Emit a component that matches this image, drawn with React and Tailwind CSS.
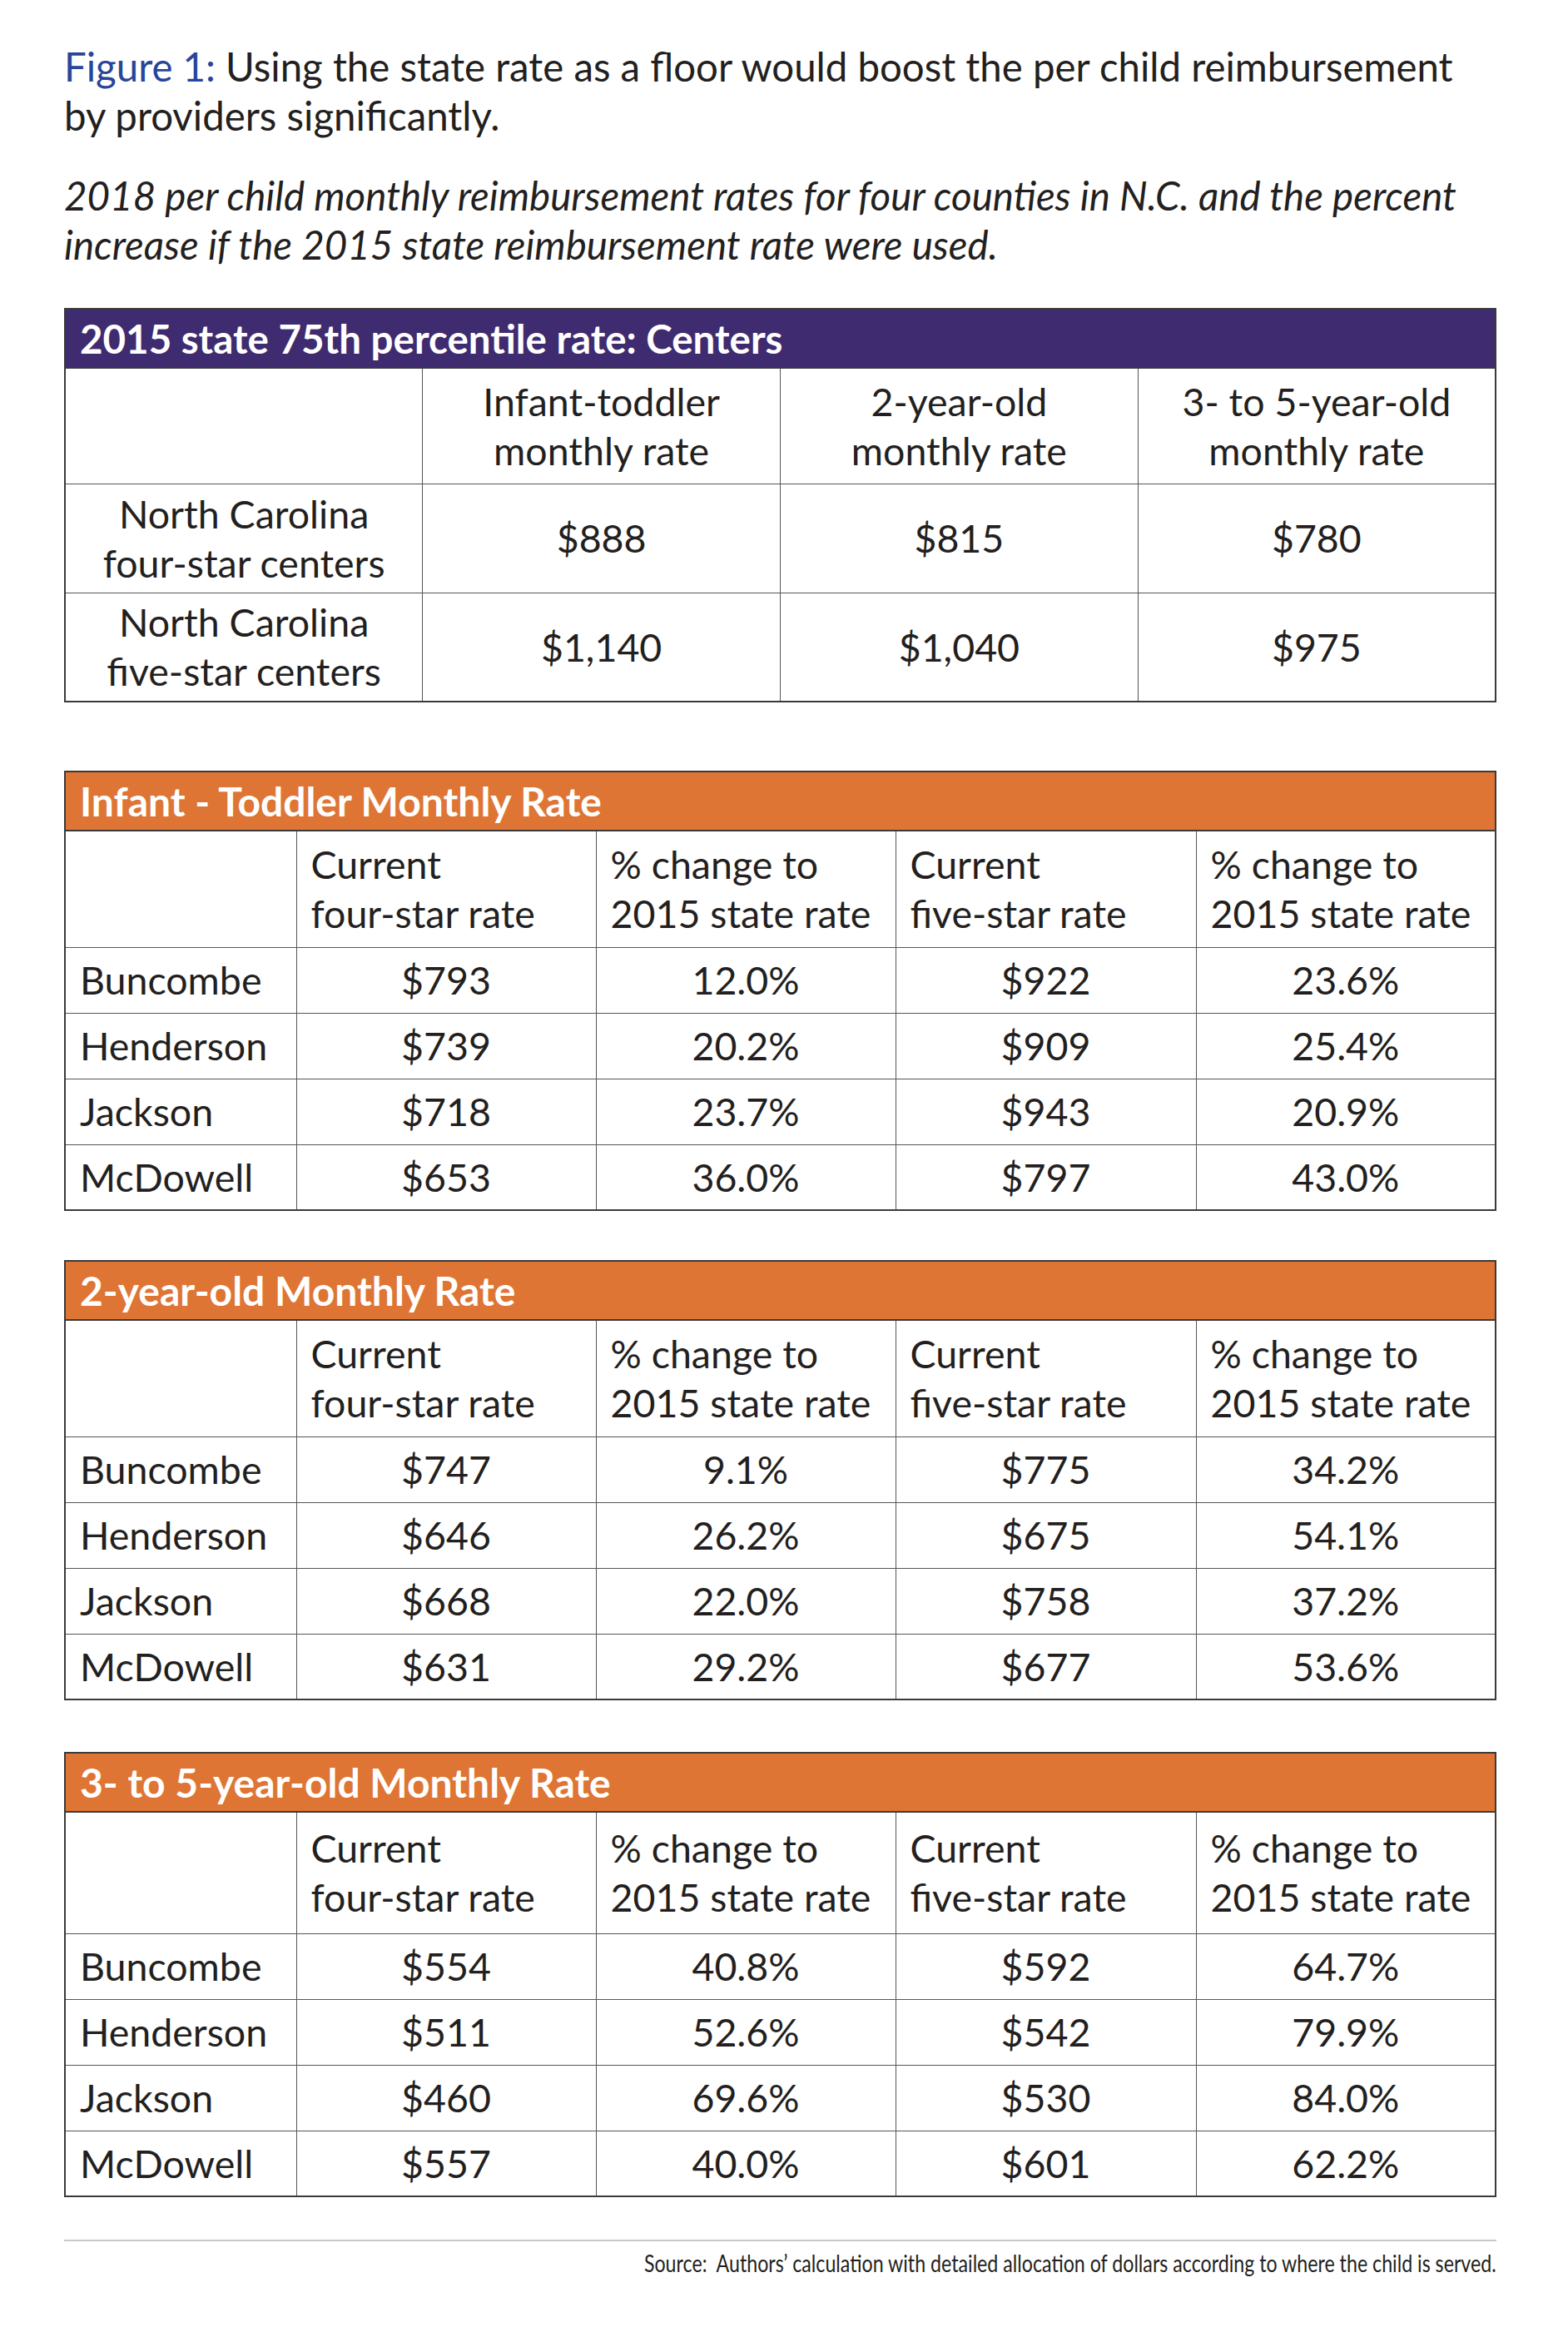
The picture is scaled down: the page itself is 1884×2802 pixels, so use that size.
import React from "react";

const FONT = { fontFamily: "Lato, 'Open Sans', sans-serif" };

const counties = ["Buncombe", "Henderson", "Jackson", "McDowell"];

const tables = [
  {
    title: "Infant - Toddler Monthly Rate",
    headH: "h-[140px]",
    rows: [
      ["$793", "12.0%", "$922", "23.6%"],
      ["$739", "20.2%", "$909", "25.4%"],
      ["$718", "23.7%", "$943", "20.9%"],
      ["$653", "36.0%", "$797", "43.0%"],
    ],
    mt: "mt-[82px]",
  },
  {
    title: "2-year-old Monthly Rate",
    headH: "h-[140px]",
    rows: [
      ["$747", "9.1%", "$775", "34.2%"],
      ["$646", "26.2%", "$675", "54.1%"],
      ["$668", "22.0%", "$758", "37.2%"],
      ["$631", "29.2%", "$677", "53.6%"],
    ],
    mt: "mt-[59px]",
  },
  {
    title: "3- to 5-year-old Monthly Rate",
    headH: "h-[146px]",
    rows: [
      ["$554", "40.8%", "$592", "64.7%"],
      ["$511", "52.6%", "$542", "79.9%"],
      ["$460", "69.6%", "$530", "84.0%"],
      ["$557", "40.0%", "$601", "62.2%"],
    ],
    mt: "mt-[62px]",
  },
];

const cell = "border-[1.5px] border-[#555555]";

function RateTable({ t }) {
  return (
    <table
      className={`${t.mt} w-full table-fixed border-collapse border-[2px] border-[#3a3a3a] text-[46.5px] leading-[59px] text-[#231f20]`}
    >
      <colgroup>
        <col className="w-[278px]" />
        <col className="w-[360px]" />
        <col className="w-[360px]" />
        <col className="w-[361px]" />
        <col className="w-[360px]" />
      </colgroup>
      <tbody>
        <tr className="h-[71px]">
          <td
            colSpan={5}
            className="border-[2px] border-[#3a3a3a] bg-[#de7534] px-[17px] text-left align-middle font-bold text-[48px] text-white"
          >
            {t.title}
          </td>
        </tr>
        <tr className={t.headH}>
          <td className={cell}></td>
          <td className={`${cell} px-[17px] text-left align-middle`}>
            Current
            <br />
            four-star rate
          </td>
          <td className={`${cell} px-[17px] text-left align-middle`}>
            % change to
            <br />
            2015 state rate
          </td>
          <td className={`${cell} px-[17px] text-left align-middle`}>
            Current
            <br />
            five-star rate
          </td>
          <td className={`${cell} px-[17px] text-left align-middle`}>
            % change to
            <br />
            2015 state rate
          </td>
        </tr>
        {t.rows.map((r, i) => (
          <tr key={i} className="h-[79px]">
            <td className={`${cell} px-[17px] text-left align-middle`}>{counties[i]}</td>
            {r.map((v, j) => (
              <td key={j} className={`${cell} text-center align-middle`}>
                {v}
              </td>
            ))}
          </tr>
        ))}
      </tbody>
    </table>
  );
}

export default function App() {
  return (
    <div className="min-h-[2802px] w-[1884px] bg-white" style={FONT}>
      <div className="ml-[77px] w-[1721px] pt-[50px] text-[#231f20]">
        <p className="text-[47.4px] leading-[59px]">
          <span className="text-[#28459a]">Figure 1:</span> Using the state rate as a floor would boost the per child reimbursement
          <br />
          by providers significantly.
        </p>
        <p className="mt-[37px] text-[47.5px] italic leading-[59px]">
          2018 per child monthly reimbursement rates for four counties in N.C. and the percent
          <br />
          increase if the 2015 state reimbursement rate were used.
        </p>

        <table className="mt-[47px] w-full table-fixed border-collapse border-[2px] border-[#3a3a3a] text-[46.5px] leading-[59px] text-[#231f20]">
          <tbody>
            <tr className="h-[71px]">
              <td
                colSpan={4}
                className="border-[2px] border-[#3a3a3a] bg-[#3f2b6f] px-[17px] text-left align-middle font-bold text-[47.5px] text-white"
              >
                2015 state 75th percentile rate: Centers
              </td>
            </tr>
            <tr className="h-[139px]">
              <td className={cell}></td>
              <td className={`${cell} text-center align-middle`}>
                Infant-toddler
                <br />
                monthly rate
              </td>
              <td className={`${cell} text-center align-middle`}>
                2-year-old
                <br />
                monthly rate
              </td>
              <td className={`${cell} text-center align-middle`}>
                3- to 5-year-old
                <br />
                monthly rate
              </td>
            </tr>
            <tr className="h-[131px]">
              <td className={`${cell} text-center align-middle`}>
                North Carolina
                <br />
                four-star centers
              </td>
              <td className={`${cell} text-center align-middle`}>$888</td>
              <td className={`${cell} text-center align-middle`}>$815</td>
              <td className={`${cell} text-center align-middle`}>$780</td>
            </tr>
            <tr className="h-[131px]">
              <td className={`${cell} text-center align-middle`}>
                North Carolina
                <br />
                five-star centers
              </td>
              <td className={`${cell} text-center align-middle`}>$1,140</td>
              <td className={`${cell} text-center align-middle`}>$1,040</td>
              <td className={`${cell} text-center align-middle`}>$975</td>
            </tr>
          </tbody>
        </table>

        {tables.map((t, i) => (
          <RateTable key={i} t={t} />
        ))}

        <div className="mt-[51px] border-t-[2px] border-[#c8c8c8] pt-[8px] text-right">
          <span className="inline-block origin-right scale-x-[0.8] whitespace-nowrap text-[29px] leading-[36px] text-[#231f20]">
            Source:&nbsp; Authors’ calculation with detailed allocation of dollars according to where the child is served.
          </span>
        </div>
      </div>
    </div>
  );
}
